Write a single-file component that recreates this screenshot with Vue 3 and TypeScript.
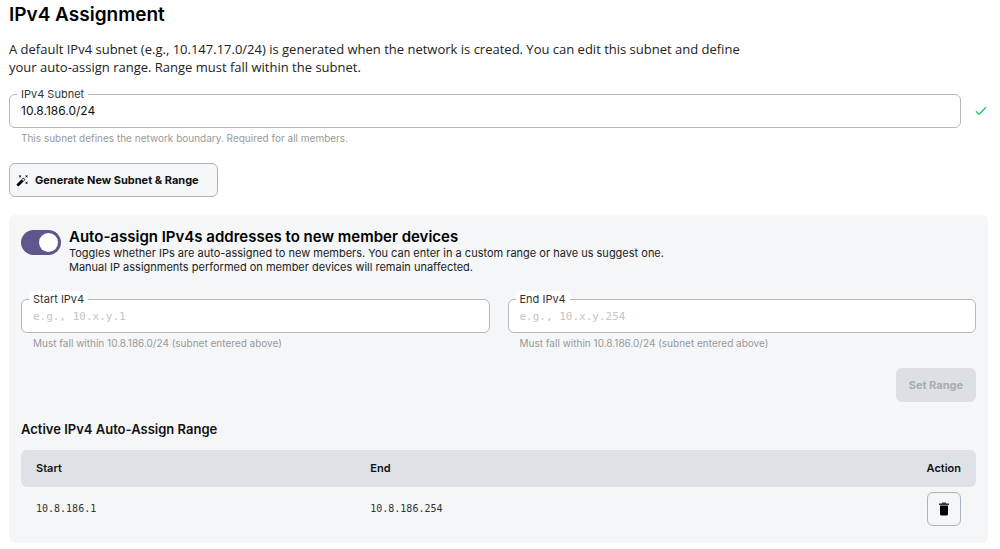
<script setup lang="ts">
import { ref } from 'vue'

interface AssignRange {
  start: string
  end: string
}

const subnet = ref('10.8.186.0/24')
const autoAssign = ref(true)
const rangeStart = ref('')
const rangeEnd = ref('')
const ranges = ref<AssignRange[]>([{ start: '10.8.186.1', end: '10.8.186.254' }])

function addRange(): void {
  ranges.value.push({ start: rangeStart.value, end: rangeEnd.value })
  rangeStart.value = ''
  rangeEnd.value = ''
}

function removeRange(index: number): void {
  ranges.value.splice(index, 1)
}
</script>

<template>
  <main class="page">
    <h1 class="title">IPv4 Assignment</h1>
    <p class="intro">
      A default IPv4 subnet (e.g., 10.147.17.0/24) is generated when the network is created. You can edit this subnet
      and define your auto-assign range. Range must fall within the subnet.
    </p>

    <div class="subnet-row">
      <div class="field">
        <label class="field-label" for="subnet">IPv4 Subnet</label>
        <input id="subnet" v-model="subnet" class="field-input" type="text" />
      </div>
      <svg class="check" viewBox="0 0 12 10" aria-hidden="true">
        <path d="M1 5.2 4.1 8.3 11 1.3" fill="none" stroke="#2fc46b" stroke-width="1.5" />
      </svg>
    </div>
    <p class="hint">This subnet defines the network boundary. Required for all members.</p>

    <button class="btn generate" type="button">
      <svg class="wand" viewBox="0 0 24 24" aria-hidden="true">
        <path
          d="m7.5 5.6 2.5 1.4-1.4-2.5L10 2 7.5 3.4 5 2l1.4 2.5L5 7zm12 9.8L17 14l1.4 2.5L17 19l2.500-1.400L22 19l-1.400-2.500L22 14zM22 2l-2.500 1.400L17 2l1.400 2.500L17 7l2.500-1.400L22 7l-1.400-2.500zm-7.630 5.290a1 1 0 0 0-1.410 0L1.290 18.960a1 1 0 0 0 0 1.410l2.340 2.340c.39.39 1.020.39 1.410 0L16.700 11.050a1 1 0 0 0 0-1.410zm-1.030 5.490-2.120-2.120 2.440-2.440 2.120 2.120z"
        />
      </svg>
      <span>Generate New Subnet &amp; Range</span>
    </button>

    <section class="panel">
      <div class="toggle-row">
        <input id="auto-assign" v-model="autoAssign" class="switch" type="checkbox" role="switch" />
        <div>
          <label class="toggle-title" for="auto-assign">Auto-assign IPv4s addresses to new member devices</label>
          <p class="toggle-text">
            Toggles whether IPs are auto-assigned to new members. You can enter in a custom range or have us suggest
            one.<br />Manual IP assignments performed on member devices will remain unaffected.
          </p>
        </div>
      </div>

      <div class="range-fields">
        <div>
          <div class="field">
            <label class="field-label" for="range-start">Start IPv4</label>
            <input id="range-start" v-model="rangeStart" class="field-input mono" type="text" placeholder="e.g., 10.x.y.1" />
          </div>
          <p class="hint">Must fall within {{ subnet }} (subnet entered above)</p>
        </div>
        <div>
          <div class="field">
            <label class="field-label" for="range-end">End IPv4</label>
            <input id="range-end" v-model="rangeEnd" class="field-input mono" type="text" placeholder="e.g., 10.x.y.254" />
          </div>
          <p class="hint">Must fall within {{ subnet }} (subnet entered above)</p>
        </div>
      </div>

      <div class="actions">
        <button class="btn set-range" type="button" :disabled="!rangeStart || !rangeEnd" @click="addRange">Set Range</button>
      </div>

      <h2 id="active-title" class="subtitle">Active IPv4 Auto-Assign Range</h2>
      <table class="ranges" aria-labelledby="active-title">
        <thead>
          <tr>
            <th class="col-start">Start</th>
            <th>End</th>
            <th class="col-action">Action</th>
          </tr>
        </thead>
        <tbody>
          <tr v-for="(range, index) in ranges" :key="range.start">
            <td>{{ range.start }}</td>
            <td>{{ range.end }}</td>
            <td class="col-action">
              <button class="btn delete" type="button" aria-label="Delete range" @click="removeRange(index)">
                <svg class="trash" viewBox="0 0 12 14" aria-hidden="true">
                  <path d="M1 1.500h2.500L4.500.500h3l1 1H11V3H1z" fill="#333" />
                  <path d="M2 3.500h8V12a1.500 1.500 0 0 1-1.500 1.500h-5A1.500 1.500 0 0 1 2 12z" />
                </svg>
              </button>
            </td>
          </tr>
        </tbody>
      </table>
    </section>
  </main>
</template>

<style>
body {
  margin: 0;
  background: #fff;
}
</style>

<style scoped>
.page {
  padding: 4px 12px 6px 9px;
  font-family: Inter, 'Liberation Sans', sans-serif;
  color: #111;
}

.page *,
.page {
  box-sizing: border-box;
}

.title {
  margin: 0;
  font-size: 19px;
  line-height: 22px;
  font-weight: 600;
  color: #000;
}

.intro {
  max-width: 740px;
  margin: 14px 0 18px;
  font-family: 'Open Sans', sans-serif;
  font-size: 13px;
  line-height: 18px;
  color: #222;
}

.subnet-row {
  display: flex;
  align-items: center;
  gap: 14px;
}

.field {
  position: relative;
  flex: 1;
}

.field-label {
  position: absolute;
  top: -8px;
  left: 8px;
  padding: 0 4px;
  border-radius: 4px;
  background: #fff;
  font-size: 11px;
  line-height: 16px;
  color: #333;
}

.field-input {
  display: block;
  width: 100%;
  height: 34px;
  padding: 0 11px 2px;
  border: 1px solid #b5b7ba;
  border-radius: 6px;
  background: #fff;
  font-family: inherit;
  font-size: 12px;
  color: #111;
}

.field-input.mono {
  padding-bottom: 0;
  font-family: 'DejaVu Sans Mono', monospace;
  font-size: 11px;
}

.mono::placeholder {
  color: #c4c4c4;
  opacity: 1;
}

.check {
  width: 12px;
  height: 10px;
  margin-right: 1px;
}

.hint {
  margin: 3px 12px 0;
  font-size: 10px;
  line-height: 14px;
  color: #999;
}

.btn {
  display: inline-flex;
  align-items: center;
  justify-content: center;
  height: 34px;
  border: 1px solid #aab4bf;
  border-radius: 6px;
  background: #f4f6f8;
  font-family: inherit;
  font-size: 11px;
  font-weight: 700;
  color: #111;
}

.generate {
  gap: 6px;
  margin-top: 18px;
  padding: 0 18px 0 6px;
}

.wand {
  width: 13px;
  height: 13px;
}

.panel {
  margin-top: 18px;
  padding: 13px 12px;
  border-radius: 6px;
  background: #f4f6f8;
}

.toggle-row {
  display: flex;
  gap: 8px;
}

.switch {
  display: flex;
  flex: none;
  appearance: none;
  width: 40px;
  height: 25px;
  margin: 2px 0 0;
  padding: 3px;
  border-radius: 13px;
  background: #b5b7ba;
}

.switch::before {
  content: '';
  width: 19px;
  height: 19px;
  border-radius: 50%;
  background: #fff;
}

.switch:checked {
  justify-content: flex-end;
  background: #5f568d;
}

.toggle-title {
  display: block;
  font-size: 15px;
  line-height: 18px;
  font-weight: 600;
  color: #000;
}

.toggle-text {
  margin: 0;
  font-size: 11px;
  line-height: 14px;
  color: #222;
}

.range-fields {
  display: grid;
  grid-template-columns: 1fr 1fr;
  gap: 18px;
  margin-top: 25px;
}

.actions {
  display: flex;
  justify-content: flex-end;
  margin-top: 18px;
}

.set-range {
  padding: 0 12px;
  border-color: #dcdfe4;
  background: #dcdfe4;
}

.set-range:disabled {
  color: #a9acb1;
}

.subtitle {
  margin: 18px 0 12px;
  font-size: 13px;
  line-height: 18px;
  font-weight: 600;
}

.ranges {
  width: 100%;
  table-layout: fixed;
  border-collapse: separate;
  border-spacing: 0;
}

.ranges th {
  height: 37px;
  padding: 0 15px 2px;
  background: #dee1e6;
  font-size: 11px;
  font-weight: 600;
  text-align: left;
}

.ranges th:first-child {
  border-radius: 6px 0 0 6px;
}

.ranges th:last-child {
  border-radius: 0 6px 6px 0;
}

.ranges td {
  height: 43px;
  padding: 0 15px;
  font-family: 'DejaVu Sans Mono', monospace;
  font-size: 10px;
  color: #333;
}

.col-start {
  width: 35%;
}

.ranges .col-action {
  text-align: right;
}

.delete {
  width: 34px;
  padding: 0;
  vertical-align: middle;
}

.trash {
  width: 12px;
  height: 14px;
}
</style>
